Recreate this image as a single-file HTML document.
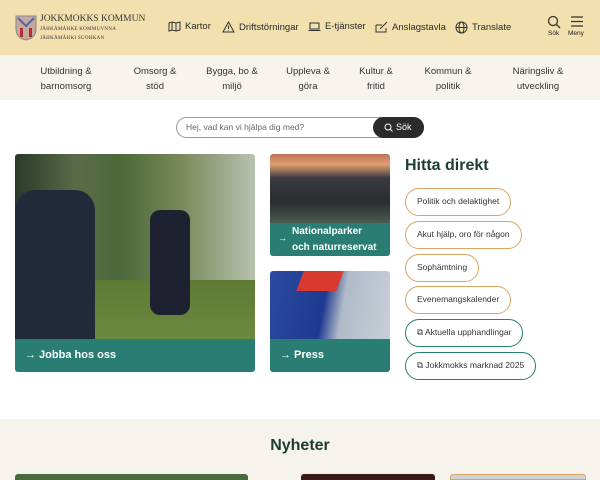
<!DOCTYPE html>
<html><head><meta charset="utf-8"><style>
*{margin:0;padding:0;box-sizing:border-box}
body{width:600px;height:480px;overflow:hidden;font-family:"Liberation Sans",sans-serif;background:#fff;position:relative;color:#222}
.abs{position:absolute}
.hdr{left:0;top:0;width:600px;height:55px;background:#f2e0ae}
.nav{left:0;top:55px;width:600px;height:45px;background:#f7f4ee}
.ni{font-size:9.5px;color:#333;text-align:center;line-height:15px;top:64px;white-space:nowrap}
.ti{font-size:9.5px;color:#2a2a2a;top:21px;display:flex;align-items:center;gap:4px;white-space:nowrap}
.teal{background:#2a7d72;color:#fff;font-weight:bold}
.pill{left:405px;height:28px;border:1.5px solid #d9a566;border-radius:14px;font-size:8.5px;color:#333;line-height:25px;padding:0 11px;background:#fff;white-space:nowrap}
.pill.g{border-color:#2a7d72}
</style></head><body>
<div class="abs hdr"></div>
<svg class="abs" style="left:15px;top:15px" width="22" height="26" viewBox="0 0 22 26"><path d="M1 1h20v13c0 7-5 10-10 11C6 24 1 21 1 14z" fill="#c9a7a0" stroke="#888"/><path d="M3 3l8 8 8-8" stroke="#4a6aa0" stroke-width="2" fill="none"/><rect x="5" y="13" width="3" height="9" fill="#b03030"/><rect x="14" y="13" width="3" height="9" fill="#b03030"/></svg>
<div class="abs" style="left:40px;top:15px;font-family:'Liberation Serif',serif;font-size:9.5px;color:#333;line-height:9px;white-space:nowrap">JOKKMOKKS KOMMUN<br><span style="font-size:5px;line-height:5.5px;letter-spacing:0.3px">JÅHKÅMÅHKE KOMMUVNNA<br>JÅHKÅMÅHKI SUOHKAN</span></div>
<div class="abs ti" style="left:168px"><svg width="13" height="11"><path d="M1 2l3-1 4 1 4-1v8l-4 1-4-1-3 1z M4 1v8 M8 2v8" stroke="#333" fill="none"/></svg>Kartor</div>
<div class="abs ti" style="left:222px"><svg width="13" height="12"><path d="M6.5 1L12 11H1z M6.5 4.5v3.5 M6.5 9v.5" stroke="#333" fill="none"/></svg>Driftstörningar</div>
<div class="abs ti" style="left:308px"><svg width="13" height="11"><path d="M2 2h9v6H2z M0.5 9.5h12" stroke="#333" fill="none"/></svg>E-tjänster</div>
<div class="abs ti" style="left:375px"><svg width="13" height="12"><path d="M1 4h6 M1 4v7h10V7 M5 8l7-7" stroke="#333" fill="none"/></svg>Anslagstavla</div>
<div class="abs ti" style="left:455px"><svg width="13" height="13"><circle cx="6.5" cy="6.5" r="5.5" stroke="#333" fill="none"/><ellipse cx="6.5" cy="6.5" rx="2.5" ry="5.5" stroke="#333" fill="none"/><path d="M1 6.5h11" stroke="#333"/></svg>Translate</div>
<svg class="abs" style="left:547px;top:15px" width="14" height="14"><circle cx="6" cy="6" r="4.5" stroke="#333" stroke-width="1.3" fill="none"/><path d="M9.5 9.5l3.5 3.5" stroke="#333" stroke-width="1.3"/></svg>
<div class="abs" style="left:548px;top:30px;font-size:6.5px">Sök</div>
<svg class="abs" style="left:571px;top:16px" width="12" height="11"><path d="M0 1h12M0 5.5h12M0 10h12" stroke="#333" stroke-width="1.3"/></svg>
<div class="abs" style="left:568px;top:30px;font-size:6.5px">Meny</div>
<div class="abs nav"></div>
<div class="abs ni" style="left:31px;width:70px">Utbildning &amp;<br>barnomsorg</div>
<div class="abs ni" style="left:122px;width:66px">Omsorg &amp;<br>stöd</div>
<div class="abs ni" style="left:197px;width:70px">Bygga, bo &amp;<br>miljö</div>
<div class="abs ni" style="left:275px;width:66px">Uppleva &amp;<br>göra</div>
<div class="abs ni" style="left:346px;width:60px">Kultur &amp;<br>fritid</div>
<div class="abs ni" style="left:413px;width:70px">Kommun &amp;<br>politik</div>
<div class="abs ni" style="left:500px;width:76px">Näringsliv &amp;<br>utveckling</div>
<div class="abs" style="left:176px;top:117px;width:248px;height:21px;border:1px solid #999;border-radius:11px"></div>
<div class="abs" style="left:186px;top:122px;font-size:8.5px;color:#666">Hej, vad kan vi hjälpa dig med?</div>
<div class="abs" style="left:373px;top:117px;width:51px;height:21px;background:#2b2b2b;border-radius:11px"></div>
<svg class="abs" style="left:384px;top:123px" width="9" height="9"><circle cx="4" cy="4" r="3" stroke="#fff" fill="none"/><path d="M6.2 6.2l2.3 2.3" stroke="#fff"/></svg>
<div class="abs" style="left:396px;top:122px;color:#fff;font-size:9px">Sök</div>
<div class="abs" style="left:15px;top:154px;width:240px;height:185px;border-radius:3px 3px 0 0;background:linear-gradient(90deg,#2a3a28 0%,#5b6a48 25%,#4c6a3a 45%,#7b8a5c 70%,#b8c2b0 100%)"></div>
<div class="abs" style="left:15px;top:280px;width:240px;height:59px;background:linear-gradient(#5e7a35,#6b8a40)"></div>
<div class="abs" style="left:15px;top:190px;width:80px;height:149px;background:#222a3a;border-radius:20px 20px 0 0"></div>
<div class="abs" style="left:150px;top:210px;width:40px;height:105px;background:#1e2230;border-radius:10px"></div>
<div class="abs teal" style="left:15px;top:339px;width:240px;height:33px;border-radius:0 0 3px 3px;font-size:11px;line-height:33px;padding-left:10px">→ Jobba hos oss</div>
<div class="abs" style="left:270px;top:154px;width:120px;height:69px;border-radius:3px 3px 0 0;background:linear-gradient(#c07058 0%,#e0a070 15%,#3a3a40 35%,#2a2e30 70%,#4a5a50 100%)"></div>
<div class="abs teal" style="left:270px;top:223px;width:120px;height:33px;border-radius:0 0 3px 3px;font-size:10px;line-height:16px;padding:1px 0 0 22px;white-space:nowrap">Nationalparker<br>och naturreservat</div>
<div class="abs" style="left:278px;top:233px;color:#fff;font-size:9px">→</div>
<div class="abs" style="left:270px;top:271px;width:120px;height:68px;border-radius:3px 3px 0 0;background:linear-gradient(100deg,#2a4aa0 0%,#1e3a90 45%,#b0bac8 60%,#c8cfd8 100%)"></div>
<div class="abs" style="left:300px;top:271px;width:40px;height:20px;background:#d83a30;transform:skew(-20deg)"></div>
<div class="abs teal" style="left:270px;top:339px;width:120px;height:33px;border-radius:0 0 3px 3px;font-size:11px;line-height:33px;padding-left:10px">→ Press</div>
<div class="abs" style="left:405px;top:157px;font-size:16px;font-weight:bold;color:#1c3c34">Hitta direkt</div>
<div class="abs pill" style="top:188px">Politik och delaktighet</div>
<div class="abs pill" style="top:221px">Akut hjälp, oro för någon</div>
<div class="abs pill" style="top:254px">Sophämtning</div>
<div class="abs pill" style="top:286px">Evenemangskalender</div>
<div class="abs pill g" style="top:319px">⧉ Aktuella upphandlingar</div>
<div class="abs pill g" style="top:352px">⧉ Jokkmokks marknad 2025</div>
<div class="abs" style="left:0;top:419px;width:600px;height:61px;background:#f6f3ec"></div>
<div class="abs" style="left:0;top:437px;width:600px;text-align:center;font-size:16px;font-weight:bold;color:#1c3c34">Nyheter</div>
<div class="abs" style="left:15px;top:474px;width:233px;height:6px;background:#4a6a40;border-radius:3px 3px 0 0"></div>
<div class="abs" style="left:301px;top:474px;width:134px;height:6px;background:#3a1a18;border-radius:3px 3px 0 0"></div>
<div class="abs" style="left:450px;top:474px;width:136px;height:6px;background:#d0d2d4;border:1px solid #d9a566;border-radius:3px 3px 0 0"></div>
</body></html>
